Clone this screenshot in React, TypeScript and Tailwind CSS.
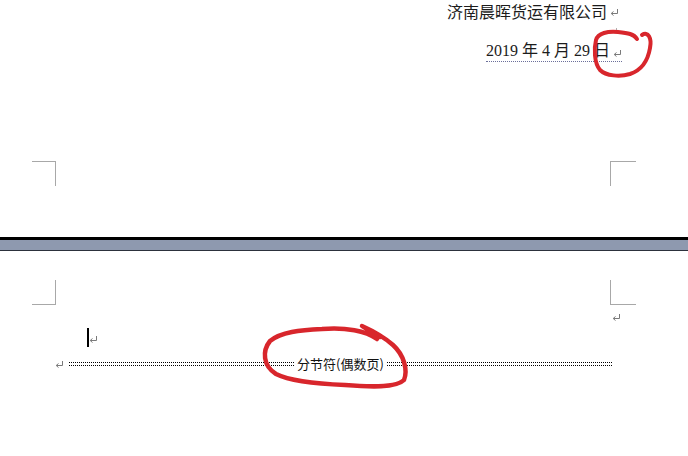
import React from 'react';

const ReturnMark: React.FC<{ className?: string }> = ({ className = '' }) => (
  <svg width="9" height="7" viewBox="0 0 9 7" className={className} fill="none">
    <path d="M7.5 0 V4.5 H1.5" stroke="#7a7a7a" strokeWidth="1" />
    <path d="M3.5 2.5 L1.2 4.5 L3.5 6.5" stroke="#7a7a7a" strokeWidth="1" />
  </svg>
);

const Mark: React.FC<{ className: string }> = ({ className }) => (
  <div className={`h-[25px] border-[#a8a8a8] ${className}`} />
);

const App: React.FC = () => {
  return (
    <div
      className="relative w-[688px] h-[456px] overflow-hidden bg-white text-[#1c1c1c]"
      style={{ fontFamily: '"Liberation Serif", "Noto Sans CJK SC", serif' }}
    >
      {/* Upper page */}
      <section className="relative h-[237px]">
        <div className="flex items-center justify-end pr-[69px] h-[22px]">
          <span className="text-[16px] leading-[22px] font-['Noto_Sans_CJK_SC',sans-serif]">
            济南晨晖货运有限公司
          </span>
          <ReturnMark className="ml-[3px] mt-[3px]" />
        </div>

        <div className="flex justify-end pr-[66px] mt-[18px]">
          <div className="flex items-end h-[22px] border-b border-dotted border-[#6b6f9a]">
            <span className="text-[16px] leading-[20px]">
              2019 年 4 月 29 日
            </span>
            <ReturnMark className="ml-[3px] mb-[4px]" />
          </div>
        </div>

        {/* text boundary tick */}
        <div className="absolute left-[616px] top-[28px] w-[1px] h-[5px] bg-[#b0b0b0]" />

        <div className="flex justify-between pl-[32px] pr-[52px] mt-[99px]">
          <Mark className="w-[24px] border-t border-r" />
          <Mark className="w-[26px] border-t border-l" />
        </div>
      </section>

      {/* Page gap */}
      <div className="h-[3px] bg-black" />
      <div className="h-[10px] bg-[#8e99af]" />
      <div className="h-[1px] bg-[#2c313c]" />

      {/* Lower page */}
      <section>
        <div className="flex justify-between pl-[32px] pr-[52px] mt-[29px]">
          <Mark className="w-[24px] border-b border-r" />
          <Mark className="w-[26px] border-b border-l" />
        </div>

        <div className="flex justify-end pr-[67px] mt-[9px] h-[8px]">
          <ReturnMark />
        </div>

        <div className="flex items-end pl-[87px] mt-[6px]">
          <div className="w-[2px] h-[19px] bg-black" />
          <ReturnMark className="mb-[4px]" />
        </div>

        <div className="flex items-center pl-[55px] pr-[76px] mt-[10px] h-[14px]">
          <ReturnMark className="mr-[5px]" />
          <div className="flex-1 h-[4px] border-y border-dotted border-black" />
          <span className="px-[3px] text-[13px] leading-[14px] text-[#111] font-['Noto_Sans_CJK_SC',sans-serif]">
            分节符(偶数页)
          </span>
          <div className="flex-1 h-[4px] border-y border-dotted border-black" />
        </div>
      </section>

      {/* Red hand-drawn annotations */}
      <svg
        className="absolute left-0 top-0 pointer-events-none"
        width="688"
        height="456"
        viewBox="0 0 688 456"
        fill="none"
      >
        <path
          d="M642 35 C648 31 652 38 650 48 C648 60 642 70 630 74 C620 77 606 76 600 70 C594 63 594 48 596 40 C598 33 608 31 618 32 C628 33 634 34 637 39"
          stroke="#d8262c"
          strokeWidth="4"
          strokeLinecap="round"
          strokeLinejoin="round"
        />
        <path
          d="M377 339 C366 331 346 327 322 329 C300 330 281 332 270 341 C262 351 263 366 276 374 C292 382 320 384 345 385 C370 387 396 388 404 380 C408 370 404 355 393 345 C384 337 373 331 362 326 C368 330 374 334 380 337"
          stroke="#d8262c"
          strokeWidth="4.5"
          strokeLinecap="round"
          strokeLinejoin="round"
        />
      </svg>
    </div>
  );
};

export default App;
